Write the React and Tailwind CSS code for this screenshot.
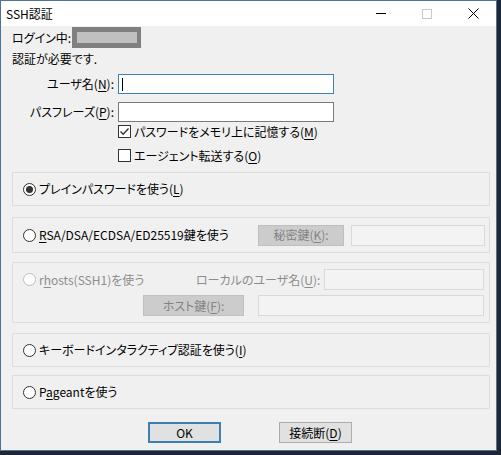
import React from "react";

const font = {
  fontFamily: '"Noto Sans CJK JP", "Liberation Sans", sans-serif',
  fontFeatureSettings: '"palt"',
};

function U({ children }) {
  return <span className="underline underline-offset-2">{children}</span>;
}

function Radio({ checked, disabled }) {
  return (
    <span
      className={`w-[13px] h-[13px] rounded-full border bg-white flex items-center justify-center shrink-0 ${
        disabled ? "border-[#bcbcbc]" : "border-[#333333]"
      }`}
    >
      {checked && <span className="w-[7px] h-[7px] rounded-full bg-[#333333]" />}
    </span>
  );
}

function Check({ checked }) {
  return (
    <span className="w-[13px] h-[13px] border border-[#333333] bg-white flex items-center justify-center shrink-0">
      {checked && (
        <svg width="11" height="11" viewBox="0 0 11 11">
          <path d="M1.5 5.5 L4.2 8.2 L9.5 2.5" fill="none" stroke="#333" strokeWidth="1.4" />
        </svg>
      )}
    </span>
  );
}

function Group({ children, className = "" }) {
  return (
    <div className={`border border-[#dcdcdc] rounded-[1px] px-[10px] ${className}`}>
      {children}
    </div>
  );
}

export default function App() {
  return (
    <div className="w-[501px] h-[455px] bg-[#1d2735] text-[12px] text-black whitespace-nowrap" style={font}>
      <div className="w-[497px] h-[451px] border border-[#4f7396] bg-[#f0f0f0] flex flex-col">
        {/* Title bar */}
        <div className="h-[25px] bg-white flex items-center shrink-0">
          <span className="pl-[5px] flex-1">SSH認証</span>
          <div className="flex h-full">
            <div className="w-[46px] flex items-center justify-center">
              <span className="w-[10px] h-[1px] bg-black" />
            </div>
            <div className="w-[46px] flex items-center justify-center">
              <span className="w-[10px] h-[10px] border border-[#c8c8c8]" />
            </div>
            <div className="w-[46px] flex items-center justify-center">
              <svg width="11" height="11" viewBox="0 0 11 11">
                <path d="M0.5 0.5 L10.5 10.5 M10.5 0.5 L0.5 10.5" stroke="#000" strokeWidth="1" />
              </svg>
            </div>
          </div>
        </div>

        {/* Body */}
        <div className="pl-[11px] pr-[6px] flex flex-col">
          <div className="flex items-center h-[21px] mt-[1px]">
            <span className="w-[60px]">ログイン中:</span>
            <div className="w-[69px] h-[21px] bg-[#808080] flex items-center justify-center">
              <span className="w-[60px] h-[11px] bg-[#c0c0c0]" />
            </div>
          </div>
          <div className="h-[21px] flex items-center">認証が必要です.</div>

          <div className="grid grid-cols-[102px_216px] gap-x-[4px] gap-y-[8px] mt-[5px] items-center">
            <span className="text-right">ユーザ名(<U>N</U>):</span>
            <div className="h-[20px] border border-[#3c7fb1] bg-white flex items-center pl-[3px]">
              <span className="w-[1px] h-[13px] bg-black" />
            </div>
            <span className="text-right">パスフレーズ(<U>P</U>):</span>
            <div className="h-[20px] border border-[#7a7a7a] bg-white" />
          </div>

          <div className="ml-[106px] mt-[3px] flex flex-col gap-[11px]">
            <div className="flex items-center gap-[3px] h-[13px]">
              <Check checked />
              <span>パスワードをメモリ上に記憶する(<U>M</U>)</span>
            </div>
            <div className="flex items-center gap-[3px] h-[13px]">
              <Check />
              <span>エージェント転送する(<U>O</U>)</span>
            </div>
          </div>

          <Group className="mt-[10px] h-[34px] flex items-center">
            <div className="flex items-center gap-[3px]">
              <Radio checked />
              <span>プレインパスワードを使う(<U>L</U>)</span>
            </div>
          </Group>

          <Group className="mt-[11px] h-[36px] flex items-center">
            <div className="flex items-center gap-[3px] w-[235px] shrink-0">
              <Radio />
              <span>
                <U>R</U>SA/DSA/ECDSA/ED25519鍵を使う
              </span>
            </div>
            <div className="w-[86px] h-[21px] shrink-0 bg-[#cccccc] border border-[#bfbfbf] text-[#838383] flex items-center justify-center">
              秘密鍵(<U>K</U>):
            </div>
            <div className="ml-[7px] w-[134px] h-[21px] shrink-0 border border-[#d9d9d9] bg-[#f3f3f3]" />
          </Group>

          <Group className="mt-[9px] h-[61px] flex flex-col justify-center gap-[5px] text-[#8d8d8d]">
            <div className="flex items-center">
              <div className="flex items-center gap-[3px] w-[173px] shrink-0">
                <Radio disabled />
                <span>
                  r<U>h</U>osts(SSH1)を使う
                </span>
              </div>
              <span className="w-[128px] shrink-0">ローカルのユーザ名(<U>U</U>):</span>
              <div className="w-[160px] h-[21px] shrink-0 border border-[#d9d9d9] bg-[#f3f3f3]" />
            </div>
            <div className="flex items-center">
              <div className="ml-[120px] w-[101px] h-[21px] shrink-0 bg-[#cccccc] border border-[#bfbfbf] text-[#838383] flex items-center justify-center">
                ホスト鍵(<U>F</U>):
              </div>
              <div className="ml-[14px] w-[226px] h-[21px] shrink-0 border border-[#d9d9d9] bg-[#f3f3f3]" />
            </div>
          </Group>

          <Group className="mt-[10px] h-[34px] flex items-center">
            <div className="flex items-center gap-[3px]">
              <Radio />
              <span>キーボードインタラクティブ認証を使う(<U>I</U>)</span>
            </div>
          </Group>

          <Group className="mt-[8px] h-[34px] flex items-center">
            <div className="flex items-center gap-[3px]">
              <Radio />
              <span>
                P<U>a</U>geantを使う
              </span>
            </div>
          </Group>

          <div className="mt-[13px] flex">
            <div className="ml-[136px] w-[73px] h-[21px] bg-[#e1e1e1] border-2 border-[#3c7fb1] flex items-center justify-center">
              OK
            </div>
            <div className="ml-[58px] w-[73px] h-[21px] bg-[#e1e1e1] border border-[#adadad] flex items-center justify-center">
              接続断(<U>D</U>)
            </div>
          </div>
        </div>
      </div>
    </div>
  );
}
